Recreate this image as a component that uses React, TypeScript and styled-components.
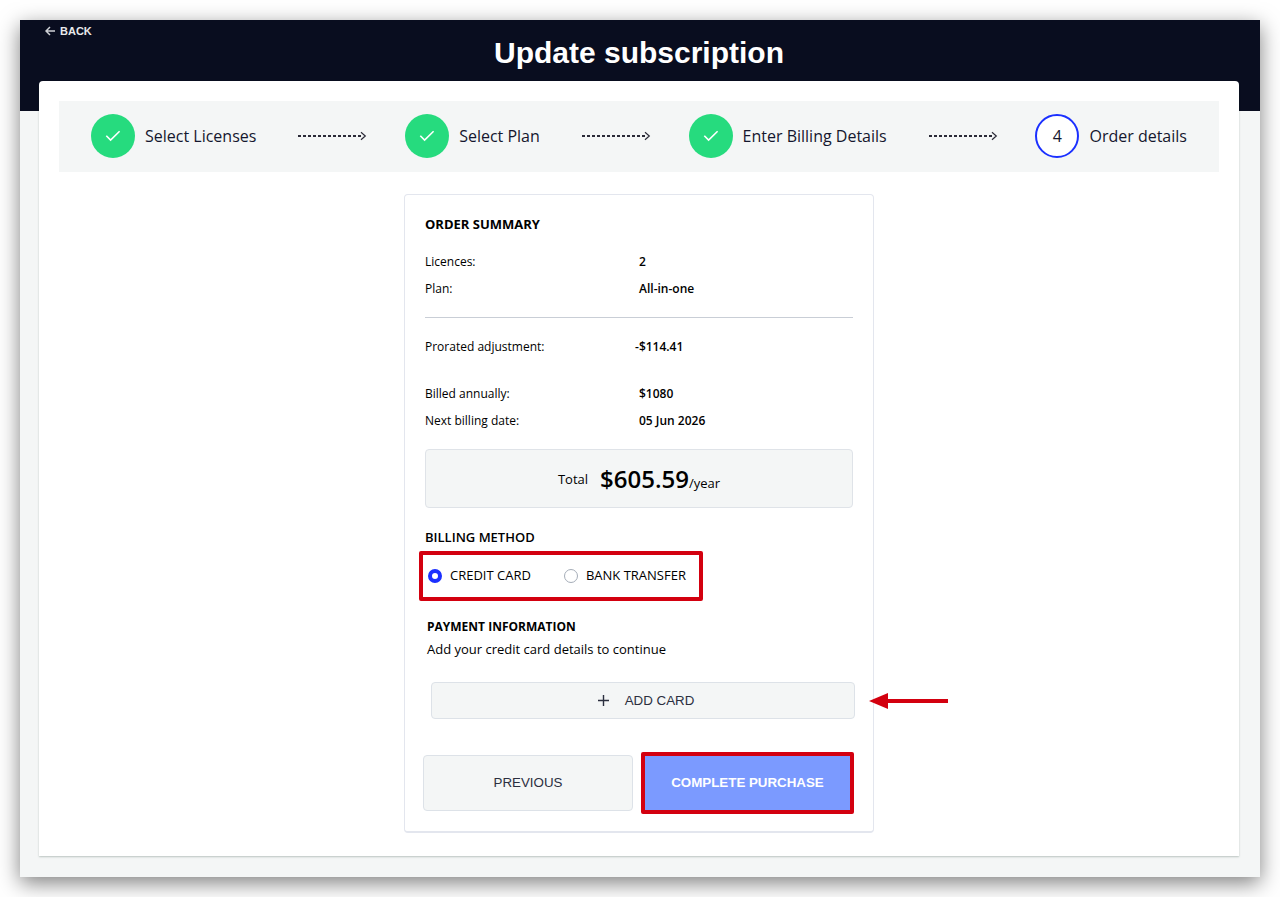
import React, { useState } from "react";
import styled, { createGlobalStyle, css } from "styled-components";

const ink = "#14172e";
const markRed = "#d3000f";
const softGrey = "#f4f6f6";
const edge = "#dfe3e8";
const helvetica = `"Liberation Sans", Arial, sans-serif`;

const GlobalStyle = createGlobalStyle`
  * { box-sizing: border-box; }
  body {
    margin: 0;
    background: #fff;
    color: #000;
    font-family: "Open Sans", "Noto Sans", sans-serif;
  }
`;

const Frame = styled.div`
  margin: 20px;
  padding-bottom: 21px;
  background: ${softGrey};
  box-shadow: 0 6px 20px rgba(0, 0, 0, 0.5);
`;

const Header = styled.header`
  display: grid;
  grid-template-columns: 1fr auto 1fr;
  align-items: start;
  height: 91px;
  padding: 0 21px 0 19px;
  background: #090d1f;
  color: #fff;
`;

const BackLink = styled.a`
  display: flex;
  align-items: center;
  justify-self: start;
  gap: 5px;
  padding: 0 6px;
  color: #e8e9ec;
  font: bold 11px/22px ${helvetica};
  text-decoration: none;
`;

const Title = styled.h1`
  margin: 0;
  padding-top: 15px;
  font: bold 30px/36px ${helvetica};
`;

const Page = styled.main`
  margin: -30px 21px 0 19px;
  padding: 20px 20px 23px;
  background: #fff;
  border-radius: 4px 4px 0 0;
  box-shadow: 0 1px 2px rgba(20, 50, 40, 0.25);
`;

const Steps = styled.ol`
  display: flex;
  align-items: center;
  justify-content: space-between;
  height: 71px;
  margin: 0 0 22px;
  padding: 0 32px 1px;
  background: ${softGrey};
  list-style: none;
`;

const Step = styled.li`
  display: flex;
  align-items: center;
  gap: 10px;
  color: ${ink};
  font-size: 16px;
  line-height: 24px;
`;

const StepMark = styled.span<{ $done?: boolean }>`
  display: flex;
  align-items: center;
  justify-content: center;
  width: 44px;
  height: 44px;
  border-radius: 50%;
  ${(p) =>
    p.$done
      ? css`
          background: #26db7e;
        `
      : css`
          background: #fff;
          border: 2px solid #1b30ff;
        `}
`;

const Connector = styled.li`
  display: flex;
  padding-left: 4px;
`;

const OrderCard = styled.form`
  width: 470px;
  max-width: 100%;
  margin: 0 auto;
  padding: 19px 20px 17px;
  border: 1px solid #e3e6ee;
  border-bottom-width: 2px;
  border-radius: 4px;
`;

const Heading = styled.h2`
  margin: 0;
  font-size: 13px;
  font-weight: 700;
  line-height: 20px;
`;

const SubHeading = styled(Heading)`
  font-weight: 600;
`;

const Details = styled.dl<{ $top: number }>`
  margin: ${(p) => p.$top}px 0 0;
`;

const Detail = styled.div`
  display: grid;
  grid-template-columns: 1fr 1fr;
  font-size: 12px;
  line-height: 27px;
`;

const Value = styled.dd`
  margin: 0;
  font-weight: 600;
`;

const Minus = styled.span`
  margin-left: -4px;
`;

const Divider = styled.hr`
  height: 1px;
  margin: 15px 0;
  border: 0;
  background: #c9ced6;
`;

const Total = styled.div`
  display: flex;
  align-items: center;
  justify-content: center;
  gap: 12px;
  height: 59px;
  margin: 15px 0 19px;
  background: ${softGrey};
  border: 1px solid ${edge};
  border-radius: 4px;
  font-size: 13px;
`;

const Price = styled.strong`
  font-size: 24px;
  font-weight: 600;
`;

const Methods = styled.fieldset`
  display: flex;
  align-items: center;
  gap: 33px;
  width: 284px;
  height: 50px;
  margin: 4px 0 16px -6px;
  padding: 0 5px;
  border: 4px solid ${markRed};
  border-radius: 2px;
`;

const Method = styled.label`
  display: flex;
  align-items: center;
  gap: 8px;
  font-size: 13px;
  line-height: 20px;
  white-space: nowrap;
`;

const MethodName = styled.span`
  padding-bottom: 2px;
`;

const Radio = styled.input`
  appearance: none;
  width: 14px;
  height: 14px;
  margin: 0;
  background: #fff;
  border: 1px solid #a5adb8;
  border-radius: 50%;
  &:checked {
    border: 4px solid #1b30ff;
  }
`;

const Payment = styled.section`
  padding-left: 2px;
`;

const PaymentHeading = styled(Heading)`
  font-size: 12px;
`;

const Note = styled.p`
  margin: 2px 0 23px;
  font-size: 13px;
  line-height: 20px;
`;

const AddRow = styled.div`
  position: relative;
  margin: 0 -2px 33px 4px;
`;

const PlainButton = styled.button<{ $height: number }>`
  display: flex;
  align-items: center;
  justify-content: center;
  gap: 16px;
  width: 100%;
  height: ${(p) => p.$height}px;
  padding: 0;
  background: ${softGrey};
  border: 1px solid #dde2e8;
  border-radius: 4px;
  color: #2b2f3f;
  font-family: ${helvetica};
  line-height: 20px;
`;

const Pointer = styled.svg`
  position: absolute;
  top: 10px;
  left: 100%;
  margin-left: 14px;
`;

const Actions = styled.div`
  display: grid;
  grid-template-columns: 210px 1fr;
  align-items: center;
  gap: 8px;
  margin: 0 -1px 0 -2px;
`;

const PurchaseButton = styled.button`
  height: 62px;
  padding: 0;
  background: #7b9aff;
  border: 4px solid ${markRed};
  border-radius: 2px;
  color: #fff;
  font-family: ${helvetica};
  font-weight: bold;
  line-height: 20px;
`;

const BackArrow = () => (
  <svg width="10" height="10" viewBox="0 0 10 10" fill="none" stroke="#cfd1d6" strokeWidth="1.5" aria-hidden="true">
    <path d="M10 5H1M5 1L1 5L5 9" />
  </svg>
);

const Check = () => (
  <svg width="16" height="12" viewBox="0 0 16 12" fill="none" stroke="#fff" strokeWidth="1.6" aria-label="Done">
    <path d="M1.3 5.8L5.6 10.1L14.6 1.3" />
  </svg>
);

const DottedArrow = () => (
  <svg width="71" height="10" viewBox="0 0 71 10" fill="none" stroke="#2b2b38" aria-hidden="true">
    <path d="M1 5H65" strokeWidth="2" strokeDasharray="3 2" />
    <path d="M64 1.2L68.3 5L64 8.8" strokeWidth="1.2" />
  </svg>
);

const Plus = () => (
  <svg width="17" height="11" viewBox="-6 0 17 11" stroke="#2b2f3f" strokeWidth="1.4" aria-hidden="true">
    <path d="M5.5 0V11M0 5.5H11" />
  </svg>
);

const steps = ["Select Licenses", "Select Plan", "Enter Billing Details", "Order details"];
const methods = ["CREDIT CARD", "BANK TRANSFER"];

const Row = ({ label, value, negative }: { label: string; value: string; negative?: boolean }) => (
  <Detail>
    <dt>{label}</dt>
    <Value>
      {negative && <Minus>-</Minus>}
      {value}
    </Value>
  </Detail>
);

export default function App() {
  const [method, setMethod] = useState(methods[0]);

  return (
    <>
      <GlobalStyle />
      <Frame>
        <Header>
          <BackLink href="#back">
            <BackArrow />
            BACK
          </BackLink>
          <Title>Update subscription</Title>
        </Header>
        <Page>
          <Steps>
            {steps.map((name, i) => {
              const done = i < steps.length - 1;
              return (
                <React.Fragment key={name}>
                  <Step>
                    <StepMark $done={done}>{done ? <Check /> : i + 1}</StepMark>
                    {name}
                  </Step>
                  {done && (
                    <Connector>
                      <DottedArrow />
                    </Connector>
                  )}
                </React.Fragment>
              );
            })}
          </Steps>

          <OrderCard onSubmit={(e) => e.preventDefault()}>
            <Heading>ORDER SUMMARY</Heading>
            <Details $top={14}>
              <Row label="Licences:" value="2" />
              <Row label="Plan:" value="All-in-one" />
            </Details>
            <Divider />
            <Details $top={0}>
              <Row label="Prorated adjustment:" value="$114.41" negative />
            </Details>
            <Details $top={20}>
              <Row label="Billed annually:" value="$1080" />
              <Row label="Next billing date:" value="05 Jun 2026" />
            </Details>
            <Total>
              <span>Total</span>
              <span>
                <Price>$605.59</Price>/year
              </span>
            </Total>

            <SubHeading id="billing-method">BILLING METHOD</SubHeading>
            <Methods aria-labelledby="billing-method">
              {methods.map((name) => (
                <Method key={name}>
                  <Radio
                    type="radio"
                    name="method"
                    value={name}
                    checked={method === name}
                    onChange={() => setMethod(name)}
                  />
                  <MethodName>{name}</MethodName>
                </Method>
              ))}
            </Methods>

            <Payment>
              <PaymentHeading>PAYMENT INFORMATION</PaymentHeading>
              <Note>Add your credit card details to continue</Note>
              <AddRow>
                <PlainButton type="button" $height={37}>
                  <Plus />
                  ADD CARD
                </PlainButton>
                <Pointer width="79" height="18" viewBox="0 0 79 18" fill={markRed} aria-hidden="true">
                  <path d="M0 9L19 1V7H79V11H19V17Z" />
                </Pointer>
              </AddRow>
            </Payment>

            <Actions>
              <PlainButton type="button" $height={56}>
                PREVIOUS
              </PlainButton>
              <PurchaseButton type="submit">COMPLETE PURCHASE</PurchaseButton>
            </Actions>
          </OrderCard>
        </Page>
      </Frame>
    </>
  );
}
